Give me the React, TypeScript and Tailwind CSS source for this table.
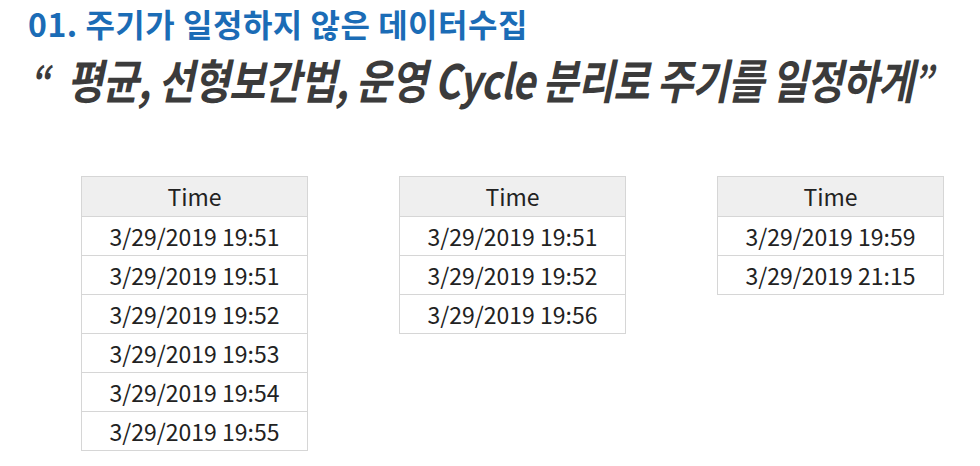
const tables: string[][] = [
  [
    '3/29/2019 19:51',
    '3/29/2019 19:51',
    '3/29/2019 19:52',
    '3/29/2019 19:53',
    '3/29/2019 19:54',
    '3/29/2019 19:55',
  ],
  ['3/29/2019 19:51', '3/29/2019 19:52', '3/29/2019 19:56'],
  ['3/29/2019 19:59', '3/29/2019 21:15'],
];

function TimeTable({ rows }: { rows: string[] }) {
  return (
    <div className="w-[227px] border-t border-x border-[#d6d6d6] text-[#222] text-[23px] leading-none">
      <div className="h-[40px] flex items-center justify-center bg-[#efefef] border-b border-[#d6d6d6]">
        Time
      </div>
      {rows.map((t, i) => (
        <div key={i} className="h-[39px] flex items-center justify-center bg-white border-b border-[#d6d6d6]">
          {t}
        </div>
      ))}
    </div>
  );
}

export default function App() {
  return (
    <div className="w-[980px] h-[466px] bg-white overflow-hidden font-['Noto_Sans_CJK_KR',sans-serif]">
      <h1 className="pl-[28px] text-[32px] leading-[47px] font-bold text-[#1b6cb6] tracking-[0.5px] whitespace-nowrap">
        01. 주기가 일정하지 않은 데이터수집
      </h1>

      <div className="mt-[4px] pl-[30px] h-[56px] flex items-start">
        <p className="origin-left scale-x-[0.84] whitespace-nowrap italic font-bold text-[47px] leading-[56px] text-[#3b3b3b] tracking-[-1px]">
          <span className="text-[40px] align-top mr-[22px]">“</span>평균, 선형보간법, 운영 Cycle 분리로 주기를 일정하게<span className="text-[40px] align-top">”</span>
        </p>
      </div>

      <div className="mt-[69px] pl-[81px] flex items-start gap-[91px]">
        {tables.map((rows, i) => (
          <TimeTable key={i} rows={rows} />
        ))}
      </div>
    </div>
  );
}
